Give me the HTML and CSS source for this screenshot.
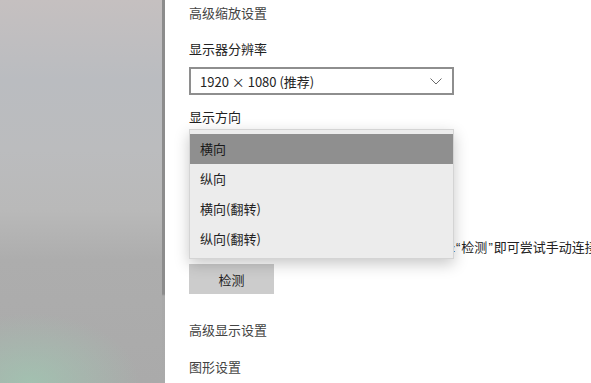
FILE: index.html
```html
<!DOCTYPE html>
<html lang="zh-CN">
<head>
<meta charset="utf-8">
<title>显示设置</title>
<link rel="stylesheet" href="styles.css">
</head>
<body>
<div class="app">
  <aside class="sidebar"></aside>
  <div class="divider"></div>
  <main class="content">
    <div class="link title">高级缩放设置</div>
    <div class="label first">显示器分辨率</div>
    <div class="select">
      <span>1920 × 1080 (推荐)</span>
      <svg class="chev" width="12" height="7" viewBox="0 0 12 7"><path d="M0.5 0.5 L6 6 L11.5 0.5" fill="none" stroke="#6a6a6a" stroke-width="1"/></svg>
    </div>
    <div class="label">显示方向</div>
    <div class="select hidden-select"></div>
    <div class="heading">多显示器</div>
    <p class="para">较旧的显示器可能不会总是自动连接。请选择<span class="q">“</span>检测<span class="q">”</span>即可尝试手动连接。</p>
    <button class="btn">检测</button>
    <div class="link adv">高级显示设置</div>
    <div class="link gfx">图形设置</div>

    <ul class="menu">
      <li class="item selected">横向</li>
      <li class="item">纵向</li>
      <li class="item">横向(翻转)</li>
      <li class="item">纵向(翻转)</li>
    </ul>
  </main>
</div>
</body>
</html>
```

FILE: styles.css
```css
html, body {
  margin: 0;
  padding: 0;
  width: 591px;
  height: 383px;
  overflow: hidden;
  background: #ffffff;
  font-family: "Noto Sans CJK SC", "Noto Sans", sans-serif;
  font-size: 13px;
  color: #2b2b2b;
}

.app {
  display: flex;
  height: 383px;
}

.sidebar {
  width: 162px;
  flex: none;
  background:
    radial-gradient(ellipse 110px 70px at 30px 383px, rgba(160, 200, 178, 0.75), rgba(160, 200, 178, 0) 100%),
    linear-gradient(180deg, #c5c0c0 0px, #babcc0 80px, #bbbcbe 150px, #b9b9b9 210px, #adadad 260px, #aaaaaa 383px);
}

.divider {
  width: 3px;
  flex: none;
  background: linear-gradient(180deg, #8c8c8c 0px, #8c8c8c 294px, #a9a9a9 296px, #aaaaaa 383px);
}

.content {
  position: relative;
  flex: 1;
  padding: 3px 0 0 24px;
  min-width: 0;
}

.link, .label, .heading {
  line-height: 20px;
  height: 20px;
  white-space: nowrap;
}

.title { color: #444; }

.label.first { margin-top: 16px; }

.label { margin-top: 12px; color: #222; }

.select {
  box-sizing: border-box;
  width: 265px;
  height: 28px;
  margin-top: 8px;
  border: 2px solid #8e8e8e;
  display: flex;
  align-items: center;
  justify-content: space-between;
  padding: 0 9px 0 9px;
  color: #222;
}

.chev { margin-right: 1px; }

.hidden-select { margin-top: 4px; }

.heading {
  margin-top: 30px;
  font-size: 15px;
}

.para {
  margin: 28px 0 0 0;
  line-height: 20px;
  white-space: nowrap;
  text-indent: 6px;
  color: #222;
}

.q {
  font-family: "Liberation Sans", sans-serif;
  padding: 0 1px;
}

.btn {
  display: block;
  margin-top: 6px;
  width: 85px;
  height: 30px;
  border: none;
  background: #cccccc;
  font-family: inherit;
  font-size: 13px;
  color: #222;
  padding: 0;
}

.adv { margin-top: 26px; color: #444; }
.gfx { margin-top: 17px; color: #444; }

.menu {
  position: absolute;
  left: 24px;
  top: 129px;
  width: 265px;
  height: 130px;
  box-sizing: border-box;
  margin: 0;
  padding: 4px 0 0 0;
  list-style: none;
  background: #ececec;
  border: 1px solid #d4d4d4;
  box-shadow: 0 5px 14px rgba(0, 0, 0, 0.22);
}

.item {
  height: 30px;
  line-height: 30px;
  padding-left: 10px;
  color: #222;
}

.item.selected {
  background: #8f8f8f;
  color: #1a1a1a;
}
```
